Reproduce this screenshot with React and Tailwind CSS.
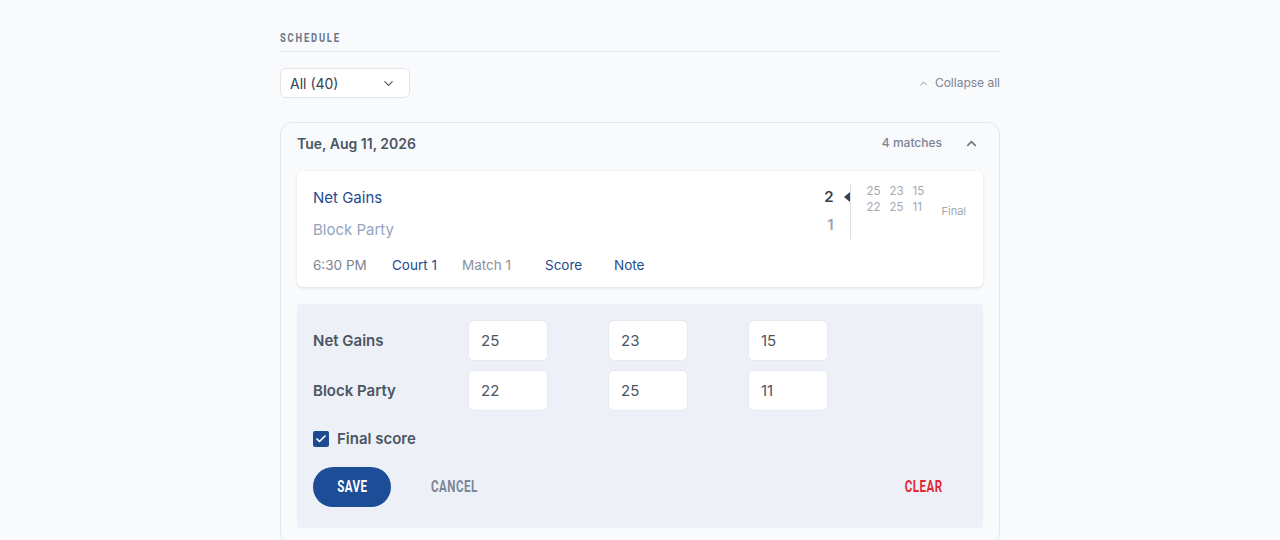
import { ChevronDown, ChevronUp, Check } from "lucide-react";

// narrow caps for labels and buttons: bold Roboto squeezed horizontally
const caps = { fontFamily: 'Roboto, "Liberation Sans", sans-serif' };

const teams = [
  { name: "Net Gains", sets: [25, 23, 15] },
  { name: "Block Party", sets: [22, 25, 11] },
];

function ScoreInput({ value }) {
  return (
    <div className="w-[80px] h-[41px] bg-white rounded-md border border-[#e5e9ef] flex items-center pl-[12px] pt-[2px] text-[15px] text-[#4b5563]">
      {value}
    </div>
  );
}

function MatchCard() {
  return (
    <div className="bg-white rounded-md shadow-[0_1px_3px_rgba(15,23,42,0.12)] pl-4 pr-4 pt-[18px] pb-[14px] flex">
      <div className="flex-1">
        <div className="text-[15px] text-[#1e4b8f] leading-[18px]">Net Gains</div>
        <div className="text-[15px] text-[#93a4c0] leading-[18px] mt-[14px]">Block Party</div>
        <div className="flex items-center text-[13.5px] mt-[18px] leading-[16px]">
          <span className="text-[#7b8494] w-[79px]">6:30 PM</span>
          <span className="text-[#1e4b8f] w-[70px]">Court 1</span>
          <span className="text-[#8a919c] w-[83px]">Match 1</span>
          <span className="text-[#1e4b8f] w-[69px]">Score</span>
          <span className="text-[#1e4b8f]">Note</span>
        </div>
      </div>
      <div className="flex items-start pt-[2px] pr-[1px]">
        <div className="flex flex-col items-end text-[15px] font-semibold leading-[18px] mt-[-3px]">
          <div className="flex items-center">
            <span className="text-[#374151]">2</span>
            <span className="ml-[10px] w-0 h-0 border-y-[5px] border-y-transparent border-r-[6px] border-r-[#374151]" />
          </div>
          <span className="text-[#9ca3af] mr-[16px] mt-[10px]">1</span>
        </div>
        <div className="w-px h-[55px] bg-[#d9dee5] mt-[-7px]" />
        <div className="ml-[16px] text-[11.5px] text-[#a3a9b3] leading-[16px] mt-[-8px]">
          {teams.map((t) => (
            <div key={t.name} className="flex gap-[10px]">
              {t.sets.map((s, i) => (
                <span key={i} className="w-[13px]">{s}</span>
              ))}
            </div>
          ))}
        </div>
        <div className="ml-[16px] mt-[12px] text-[11px] text-[#a3a9b3]">Final</div>
      </div>
    </div>
  );
}

function ScoreEditor() {
  return (
    <div className="mt-[17px] bg-[#edf1f7] rounded-sm px-4 pt-4 pb-[21px]">
      <div className="flex flex-col gap-[9px]">
        {teams.map((t) => (
          <div key={t.name} className="flex items-center">
            <div className="w-[155px] pt-[2px] text-[15px] font-semibold text-[#4b5563]">{t.name}</div>
            <div className="flex gap-[60px]">
              {t.sets.map((s, i) => (
                <ScoreInput key={i} value={s} />
              ))}
            </div>
          </div>
        ))}
      </div>
      <label className="flex items-center gap-2 mt-[17px]">
        <span className="w-4 h-4 bg-[#1e4b8f] rounded-[2px] flex items-center justify-center">
          <Check size={12} strokeWidth={3.5} color="white" />
        </span>
        <span className="text-[15px] font-semibold text-[#4b5563]">Final score</span>
      </label>
      <div className="flex items-center mt-[16px] pr-[24px]" style={caps}>
        <button className="w-[78px] h-[40px] rounded-full bg-[#1d4d96] text-white text-[17px] font-bold flex items-center justify-center">
          <span className="inline-block scale-x-[0.68] tracking-[0.7px]">SAVE</span>
        </button>
        <button className="ml-[40px] text-[17px] font-bold text-[#7c8596]">
          <span className="inline-block scale-x-[0.68] origin-left tracking-[0.7px]">CANCEL</span>
        </button>
        <button className="ml-auto text-[17px] font-bold text-[#e32636]">
          <span className="inline-block scale-x-[0.68] origin-right tracking-[0.7px]">CLEAR</span>
        </button>
      </div>
    </div>
  );
}

export default function App() {
  return (
    <div
      className="min-h-[540px] bg-[#f8fafc] pt-[30px]"
      style={{ fontFamily: 'Inter, "Noto Sans", sans-serif' }}
    >
      <div className="w-[720px] mx-auto">
        <div className="flex pb-[5px] border-b border-[#e2e6eb] leading-[16px]" style={caps}>
          <span className="inline-block scale-x-75 origin-left text-[12.5px] leading-[16px] font-bold tracking-[2.4px] text-[#6b7589]">
            SCHEDULE
          </span>
        </div>

        <div className="flex items-center justify-between mt-4">
          <div className="w-[130px] h-[30px] bg-white border border-[#e2e6eb] rounded-md flex items-center justify-between pl-[9px] pr-[13px] text-[14px] text-[#374151]">
            <span>All (40)</span>
            <ChevronDown size={15} strokeWidth={1.8} color="#4b5563" />
          </div>
          <div className="flex items-center gap-[6px] text-[12px] text-[#7b8494]">
            <ChevronUp size={11} strokeWidth={2} />
            <span>Collapse all</span>
          </div>
        </div>

        <div className="mt-6 border border-[#e2e6eb] rounded-xl px-4 pt-[8px] pb-4">
          <div className="flex items-center justify-between h-[24px] mb-[16px]">
            <span className="text-[14px] font-semibold text-[#4b5563]">Tue, Aug 11, 2026</span>
            <div className="flex items-center gap-[22px] pr-[4px]">
              <span className="text-[12px] font-medium text-[#7b8494]">4 matches</span>
              <ChevronUp size={15} strokeWidth={2.5} color="#6b7280" />
            </div>
          </div>
          <MatchCard />
          <ScoreEditor />
        </div>
      </div>
    </div>
  );
}
